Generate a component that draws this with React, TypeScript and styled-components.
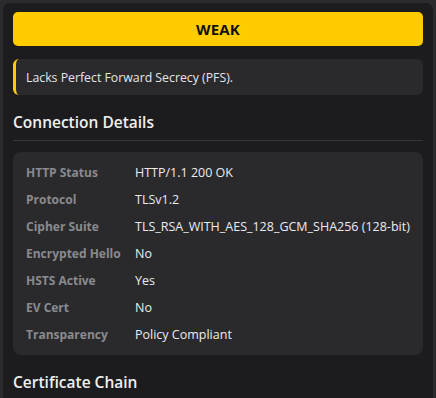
import React from "react";
import styled, { createGlobalStyle } from "styled-components";

const Global = createGlobalStyle`
  html, body { margin: 0; padding: 0; background: #2b2b2f; }
  body { font-family: "Open Sans", "Noto Sans", sans-serif; overflow: hidden; }
`;

const Panel = styled.div`
  margin: 2px 2px 0 2px;
  height: 420px;
  box-sizing: border-box;
  background: #1c1c1f;
  border: 1px solid #2c2c30;
  border-radius: 8px;
  padding: 9px 10px 0 10px;
  display: flex;
  flex-direction: column;
`;

const Badge = styled.div`
  height: 34px;
  background: #ffcc00;
  border-radius: 5px;
  display: flex;
  align-items: center;
  justify-content: center;
  color: #111;
  font-weight: 700;
  font-size: 15px;
  letter-spacing: 0.2px;
`;

const Warning = styled.div`
  margin-top: 13px;
  height: 36px;
  box-sizing: border-box;
  background: #2a2a2d;
  border-left: 3px solid #ffcc00;
  border-radius: 6px;
  padding-left: 10px;
  display: flex;
  align-items: center;
  color: #e6e6e6;
  font-size: 12.3px;
`;

const Heading = styled.h3<{ $divider?: boolean }>`
  margin: 0;
  padding: 16px 0 7px 0;
  font-size: 15.5px;
  font-weight: 600;
  color: #f0f0f0;
  line-height: 22px;
  border-bottom: ${(p) => (p.$divider ? "1px solid #35353a" : "none")};
`;

const Card = styled.div`
  margin-top: 11px;
  background: #2a2a2d;
  border-radius: 8px;
  padding: 7px 13px 7px 13px;
  display: grid;
  grid-template-columns: 109px 1fr;
`;

const Label = styled.div`
  font-weight: 700;
  font-size: 12px;
  color: #8a8a8e;
  line-height: 27px;
  white-space: nowrap;
`;

const Value = styled.div`
  font-size: 12.5px;
  color: #ececec;
  line-height: 27px;
  white-space: nowrap;
`;

const rows: [string, string][] = [
  ["HTTP Status", "HTTP/1.1 200 OK"],
  ["Protocol", "TLSv1.2"],
  ["Cipher Suite", "TLS_RSA_WITH_AES_128_GCM_SHA256 (128-bit)"],
  ["Encrypted Hello", "No"],
  ["HSTS Active", "Yes"],
  ["EV Cert", "No"],
  ["Transparency", "Policy Compliant"],
];

export default function App() {
  return (
    <>
      <Global />
      <Panel>
        <Badge>WEAK</Badge>
        <Warning>Lacks Perfect Forward Secrecy (PFS).</Warning>
        <Heading $divider>Connection Details</Heading>
        <Card>
          {rows.map(([k, v]) => (
            <React.Fragment key={k}>
              <Label>{k}</Label>
              <Value>{v}</Value>
            </React.Fragment>
          ))}
        </Card>
        <Heading>Certificate Chain</Heading>
      </Panel>
    </>
  );
}
